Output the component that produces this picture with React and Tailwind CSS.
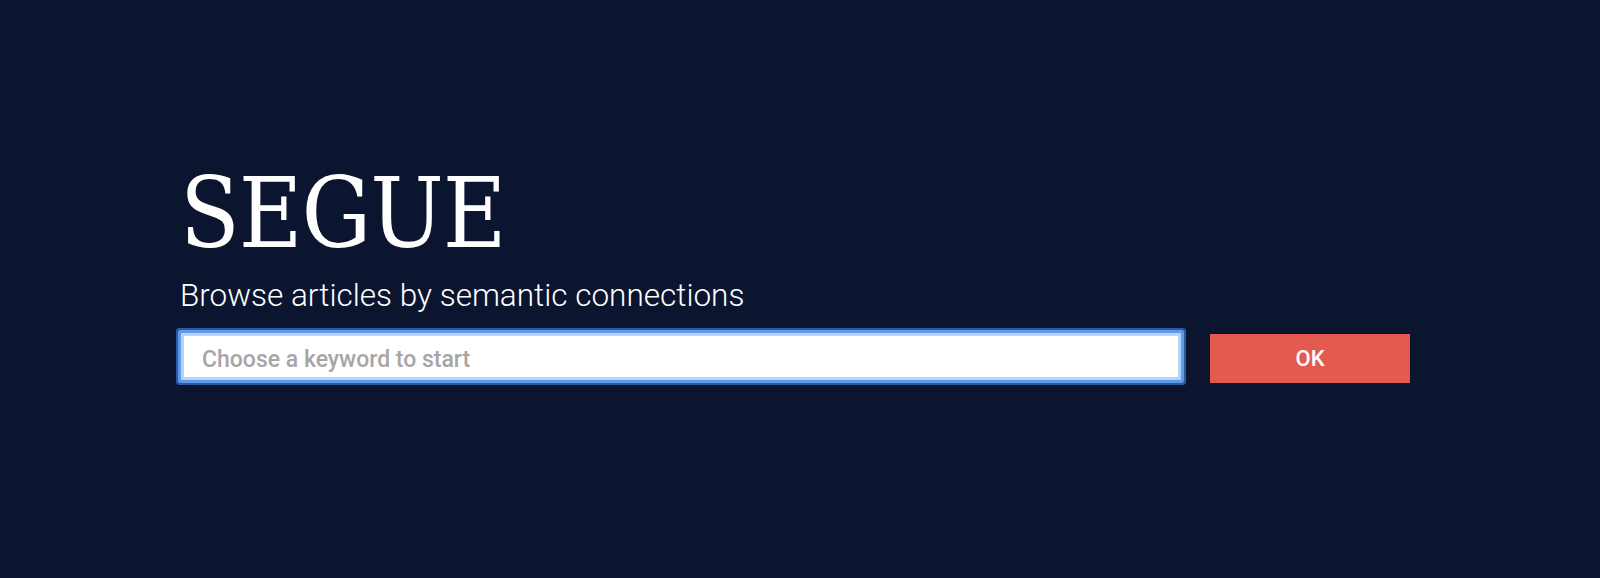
import { useState } from "react";

const App = () => {
  const [keyword, setKeyword] = useState("");

  return (
    <main className="w-screen h-screen bg-[#0b1530] overflow-hidden">
      <div className="w-[1240px] ml-[180px] pt-[165px]">
        <h1 className="text-[97px] leading-none text-white font-['DejaVu_Serif_Condensed','DejaVu_Serif',serif] tracking-[-1px]">
          SEGUE
        </h1>
        <p className="mt-[18px] text-[31.5px] leading-none text-white font-light font-['Roboto',sans-serif]">
          Browse articles by semantic connections
        </p>
        <div className="mt-[21px] flex items-start">
          <input
            type="text"
            value={keyword}
            onChange={(e) => setKeyword(e.target.value)}
            placeholder="Choose a keyword to start"
            className="ml-[1px] w-[1000px] h-[47px] bg-white border-[3px] border-[#b3d3f9] rounded-[1px] pt-[7px] pl-[18px] pr-[15px] text-[23px] font-medium text-gray-800 placeholder:text-[#a6a6a6] font-['Roboto',sans-serif] outline-none shadow-[0_0_0_3px_#5f9ae8,0_0_0_5px_#2c5aa0]"
          />
          <button className="ml-[29px] mt-[1px] w-[200px] h-[49px] bg-[#e35b4f] text-white text-[22px] font-medium font-['Roboto',sans-serif]">
            OK
          </button>
        </div>
      </div>
    </main>
  );
};

export default App;
